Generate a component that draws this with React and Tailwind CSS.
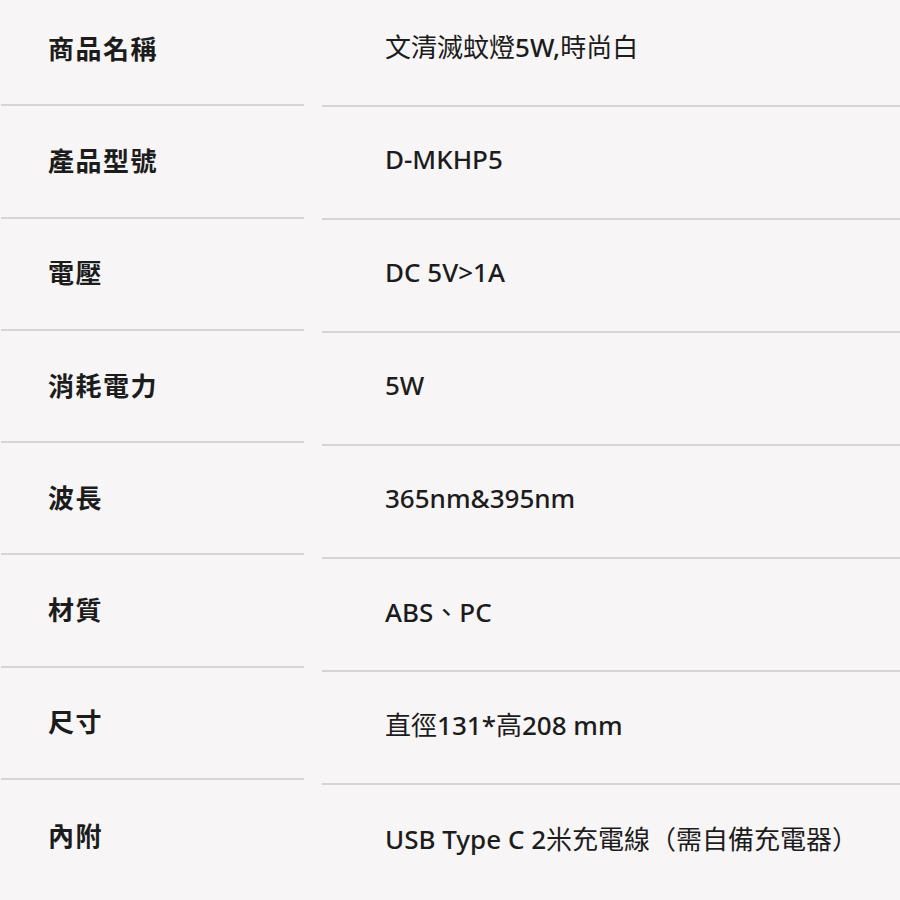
const specs = [
  { label: "商品名稱", value: "文清滅蚊燈5W,時尚白" },
  { label: "產品型號", value: "D-MKHP5" },
  { label: "電壓", value: "DC 5V>1A" },
  { label: "消耗電力", value: "5W" },
  { label: "波長", value: "365nm&395nm" },
  { label: "材質", value: "ABS、PC" },
  { label: "尺寸", value: "直徑131*高208 mm" },
  { label: "內附", value: "USB Type C 2米充電線（需自備充電器）" },
];

// latin runs are a touch heavier than the CJK ones in the source page
function SpecValue({ text }) {
  const parts = text.split(/([\u3000-\u9fff\uff00-\uffef]+)/).filter(Boolean);
  return (
    <span className="text-[26px] text-[#1c1c1c]">
      {parts.map((part, i) =>
        /[\u3000-\u9fff\uff00-\uffef]/.test(part) ? (
          <span key={i} className="font-normal" style={{ fontFamily: '"Noto Sans CJK TC", sans-serif' }}>
            {part}
          </span>
        ) : (
          <span key={i} className="font-medium" style={{ fontFamily: '"Noto Sans", "Open Sans", sans-serif' }}>
            {part}
          </span>
        )
      )}
    </span>
  );
}

export default function App() {
  return (
    <div
      className="h-[900px] w-[900px] overflow-hidden bg-[#f7f5f6]"
      style={{ fontFamily: '"Open Sans", "Noto Sans CJK TC", sans-serif' }}
    >
      <div className="-mt-[6px] flex gap-[18px] pl-[1px]">
        <div className="w-[303px] shrink-0">
          {specs.map((row, i) => (
            <div
              key={row.label}
              className={`flex h-[112.3px] items-center pl-[47px] ${
                i < specs.length - 1 ? "border-b-2 border-[#d6d4d5]" : ""
              }`}
            >
              <span className="text-[26px] font-bold tracking-[1.5px] text-[#1c1c1c]">{row.label}</span>
            </div>
          ))}
        </div>
        <div className="flex-1">
          {specs.map((row, i) => (
            <div
              key={row.label}
              className={`flex h-[113px] items-center pb-[6px] pl-[63px] ${
                i < specs.length - 1 ? "border-b-2 border-[#d6d4d5]" : ""
              }`}
            >
              <SpecValue text={row.value} />
            </div>
          ))}
        </div>
      </div>
    </div>
  );
}
